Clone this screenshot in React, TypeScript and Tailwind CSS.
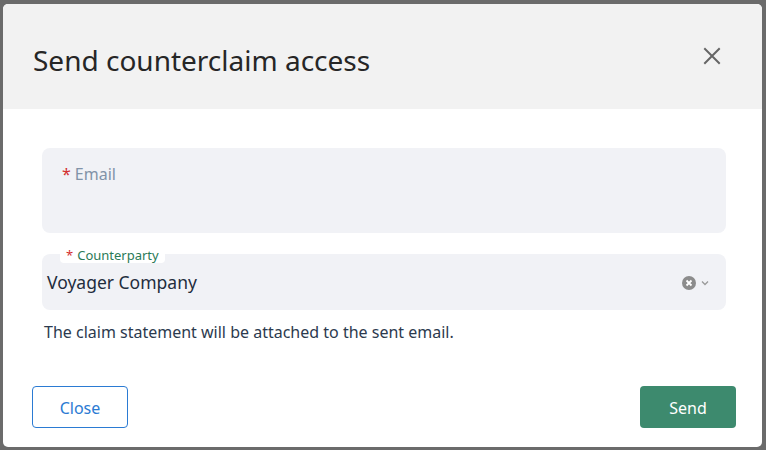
import React, { useState } from "react";

const font = { fontFamily: '"Noto Sans", "Open Sans", Arial, sans-serif' };

const CloseIcon = () => (
  <svg width="18" height="18" viewBox="0 0 18 18" fill="none">
    <path d="M2 2L16 16M16 2L2 16" stroke="#666666" strokeWidth="2" strokeLinecap="square" />
  </svg>
);

const ClearIcon = () => (
  <svg width="14" height="14" viewBox="0 0 14 14">
    <circle cx="7" cy="7" r="7" fill="#8c8c8c" />
    <path d="M4.5 4.5L9.5 9.5M9.5 4.5L4.5 9.5" stroke="#ffffff" strokeWidth="1.8" />
  </svg>
);

const ChevronIcon = () => (
  <svg width="10" height="10" viewBox="0 0 10 10" fill="none">
    <path d="M2 3.5L5 6.5L8 3.5" stroke="#9a9a9a" strokeWidth="1.3" />
  </svg>
);

const App = () => {
  const [email, setEmail] = useState("");

  return (
    <div
      className="w-[766px] h-[450px] bg-[#6b6b6b] pt-[4px] pl-[3px] overflow-hidden"
      style={font}
    >
      <div className="w-[759px] h-[443px] bg-white rounded-[5px] overflow-hidden flex flex-col">
        <div className="h-[105px] bg-[#f2f2f2] flex items-center justify-between pl-[30px] pr-[41px] shrink-0">
          <div className="text-[28px] leading-[34px] text-[#262626] pt-[6px]">
            Send counterclaim access
          </div>
          <button className="mt-[-2px]">
            <CloseIcon />
          </button>
        </div>

        <div className="flex flex-col px-[39px] pt-[39px] pr-[36px]">
          <div className="h-[85px] rounded-[8px] bg-[#f1f2f6] px-[20px] pt-[15px]">
            <div className="flex items-center gap-[4px] text-[16px] leading-[22px]">
              <span className="text-[#d32f2f]">*</span>
              <input
                className="flex-1 bg-transparent outline-none text-[#1f2d3d] placeholder:text-[#8193a8]"
                placeholder="Email"
                value={email}
                onChange={(e) => setEmail(e.target.value)}
              />
            </div>
          </div>

          <div className="relative mt-[21px] h-[56px] rounded-[8px] bg-[#f1f2f6] flex items-center pl-[5px] pr-[16px]">
            <div className="absolute left-[18px] -top-[7px] bg-white rounded-[4px] px-[6px] text-[13px] leading-[16px] text-[#2a7a58] flex gap-[4px]">
              <span className="text-[#d32f2f]">*</span>
              <span>Counterparty</span>
            </div>
            <div className="flex-1 text-[17.5px] text-[#1f2d3d]">Voyager Company</div>
            <div className="flex items-center gap-[4px] pt-[2px]">
              <ClearIcon />
              <ChevronIcon />
            </div>
          </div>

          <div className="mt-[11px] ml-[2px] text-[16px] leading-[22px] text-[#2c3a4e]">
            The claim statement will be attached to the sent email.
          </div>
        </div>

        <div className="mt-auto flex items-center justify-between pl-[29px] pr-[26px] pb-[19px]">
          <button className="w-[96px] h-[42px] rounded-[4px] border border-[#2b7bd3] text-[#2b7bd3] text-[16px] bg-white pt-[1px]">
            Close
          </button>
          <button className="w-[96px] h-[42px] rounded-[4px] bg-[#3d8a6e] text-white text-[16px] pt-[1px]">
            Send
          </button>
        </div>
      </div>
    </div>
  );
};

export default App;
